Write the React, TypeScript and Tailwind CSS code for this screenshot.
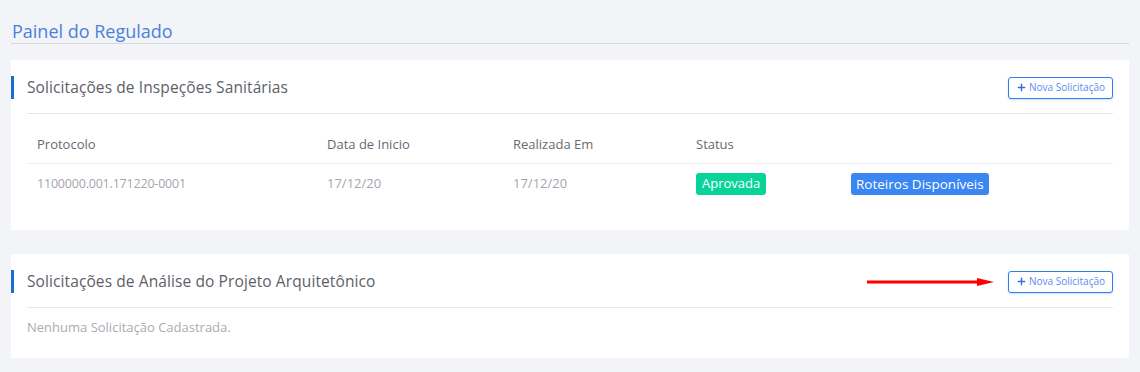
import { Plus } from "lucide-react";

const font = { fontFamily: '"Open Sans", "Liberation Sans", sans-serif' };

function NewButton() {
  return (
    <button className="flex h-[22px] items-center gap-[2px] rounded-[3px] border border-[#2f80ed] bg-white px-[7px] text-[10px] text-[#5b8def] shadow-[0_1px_2px_rgba(47,128,237,0.25)]">
      <Plus className="h-[11px] w-[11px] text-[#2f6fe0]" strokeWidth={3} />
      Nova Solicitação
    </button>
  );
}

function CardHeader({ title, arrow }: { title: string; arrow?: boolean }) {
  return (
    <div className="flex h-[23px] items-center justify-between pr-4">
      <div className="flex h-full items-center">
        <div className="h-full w-[3px] bg-[#1a6fd6]" />
        <h2 className="pl-[13px] text-[15.5px] tracking-[0.1px] text-[#5c6168]">{title}</h2>
      </div>
      <div className="flex items-center gap-[14px]">
        {arrow && (
          <svg width="127" height="10" viewBox="0 0 127 10">
            <line x1="0" y1="5" x2="112" y2="5" stroke="#f00" strokeWidth="3" />
            <polygon points="110,1 127,5 110,9" fill="#f00" />
          </svg>
        )}
        <NewButton />
      </div>
    </div>
  );
}

export default function App() {
  return (
    <div style={font} className="min-h-[372px] w-full bg-[#f3f4f8] px-[11px] pt-[21px]">
      <div className="border-b border-[#d6d8de] pb-[2px] pl-px">
        <h1 className="text-[18px] leading-[20px] text-[#4a80dc]">Painel do Regulado</h1>
      </div>

      <section className="mt-4 bg-white pb-[26px] pt-4">
        <CardHeader title="Solicitações de Inspeções Sanitárias" />
        <div className="mx-4 mt-[14px] border-t border-[#e6e7ea]" />
        <div className="mx-4 mt-3 grid grid-cols-[290px_186px_183px_155px_1fr] text-[13px]">
          <div className="flex h-[38px] items-center border-b border-[#eeeff1] px-[10px] text-[#666b72]">Protocolo</div>
          <div className="flex h-[38px] items-center border-b border-[#eeeff1] px-[10px] text-[#666b72]">Data de Inicio</div>
          <div className="flex h-[38px] items-center border-b border-[#eeeff1] px-[10px] text-[#666b72]">Realizada Em</div>
          <div className="flex h-[38px] items-center border-b border-[#eeeff1] px-[10px] text-[#666b72]">Status</div>
          <div className="flex h-[38px] items-center border-b border-[#eeeff1] px-[10px]" />
          <div className="flex h-[40px] items-center px-[10px] text-[12.5px] tracking-[-0.2px] text-[#a3a6ad]">1100000.001.171220-0001</div>
          <div className="flex h-[40px] items-center px-[10px] text-[#a3a6ad]">17/12/20</div>
          <div className="flex h-[40px] items-center px-[10px] text-[#a3a6ad]">17/12/20</div>
          <div className="flex h-[40px] items-center px-[10px]">
            <span className="rounded-[3px] bg-[#08d49a] px-[6px] py-px text-[13px] text-white">Aprovada</span>
          </div>
          <div className="flex h-[40px] items-center px-[10px]">
            <span className="rounded-[3px] bg-[#3b86f2] px-[5px] py-px text-[13.5px] text-white">Roteiros Disponíveis</span>
          </div>
        </div>
      </section>

      <section className="mt-6 bg-white pb-[20px] pt-4">
        <CardHeader title="Solicitações de Análise do Projeto Arquitetônico" arrow />
        <div className="mx-4 mt-[14px] border-t border-[#e6e7ea]" />
        <p className="mx-4 mt-[10px] text-[13px] text-[#a9acb2]">Nenhuma Solicitação Cadastrada.</p>
      </section>
    </div>
  );
}
